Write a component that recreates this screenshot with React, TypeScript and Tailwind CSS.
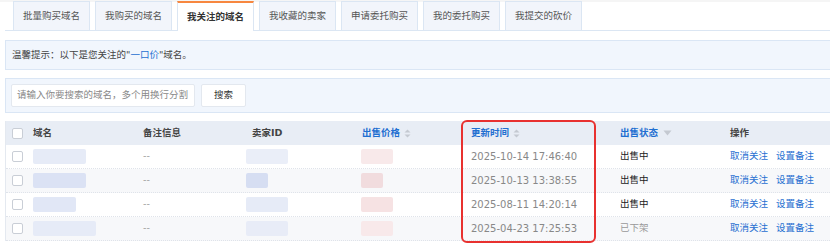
import React from "react";

const tabs = [
  "批量购买域名",
  "我购买的域名",
  "我关注的域名",
  "我收藏的卖家",
  "申请委托购买",
  "我的委托购买",
  "我提交的砍价",
];

const rows = [
  { time: "2025-10-14 17:46:40", status: "出售中", on: true, d: "w-[53px] bg-[#e6ebf7]", s: "w-[42px] bg-[#eaeef8]", p: "w-[32px] bg-[#f8e9ea]" },
  { time: "2025-10-13 13:38:55", status: "出售中", on: true, d: "w-[53px] bg-[#dbe2f4]", s: "w-[22px] bg-[#d6def2]", p: "w-[22px] bg-[#f1dcde]" },
  { time: "2025-08-11 14:20:14", status: "出售中", on: true, d: "w-[43px] bg-[#e1e7f6]", s: "w-[42px] bg-[#e6ebf7]", p: "w-[32px] bg-[#f6e2e3]" },
  { time: "2025-04-23 17:25:53", status: "已下架", on: false, d: "w-[63px] bg-[#e6ebf7]", s: "w-[42px] bg-[#e8ecf7]", p: "w-[32px] bg-[#f8e9ea]" },
];

const cols = "grid grid-cols-[27px_110px_109px_110px_109px_149px_110px_1fr] items-center";

function Sort() {
  return (
    <svg width="7" height="9" viewBox="0 0 7 9" className="ml-[4px]">
      <path d="M3.5 0.5 L6.5 3.6 L0.5 3.6 Z" fill="#c4c9d1" />
      <path d="M3.5 8.5 L6.5 5.4 L0.5 5.4 Z" fill="#c4c9d1" />
    </svg>
  );
}

function Check() {
  return <div className="ml-[6px] h-[11px] w-[11px] rounded-[2px] border border-[#c9ced6] bg-white" />;
}

export default function App() {
  return (
    <div
      className="h-[246px] w-[830px] overflow-hidden bg-white text-[9.5px] text-[#333]"
      style={{ fontFamily: '"DejaVu Sans", "Noto Sans CJK SC", sans-serif' }}
    >
      <div className="h-[2px] bg-[#f5f5f5]" />

      {/* tabs */}
      <div className="ml-[5px] flex h-[29px] items-end border-b border-[#dbe6f3] pl-[8px]">
        {tabs.map((t, i) =>
          i === 2 ? (
            <div
              key={t}
              className="relative -mb-px mr-[5px] flex h-[30px] w-[77px] items-center justify-center border-x border-t-2 border-x-[#dbe6f3] border-t-[#f7873f] bg-white font-bold text-[#333]"
            >
              {t}
            </div>
          ) : (
            <div
              key={t}
              className="mr-[5px] flex h-[29px] w-[77px] items-center justify-center border-x border-t border-[#dbe6f3] bg-[#f2f5fb] text-[#555]"
            >
              {t}
            </div>
          )
        )}
      </div>

      {/* tip */}
      <div className="ml-[5px] mt-[9px] flex h-[30px] items-center border-y border-l border-[#dae6f5] bg-[#f1f6fd] pl-[6px] text-[#444]">
        温馨提示：以下是您关注的"<span className="text-[#1f6fd1]">一口价</span>"域名。
      </div>

      {/* search */}
      <div className="ml-[5px] mt-[8px] flex h-[35px] items-center gap-[6px] border-y border-l border-[#dae6f5] bg-[#f1f6fd] pl-[5px]">
        <div className="flex h-[23px] w-[184px] items-center overflow-hidden whitespace-nowrap rounded-[2px] border border-[#e3e8ef] bg-white pl-[5px] text-[#888]">
          请输入你要搜索的域名，多个用换行分割
        </div>
        <div className="flex h-[23px] w-[45px] items-center justify-center rounded-[2px] border border-[#e3e8ef] bg-white text-[#333]">
          搜索
        </div>
      </div>

      {/* table */}
      <div className="relative ml-[5px] mt-[8px] border-l border-[#e4e9f0]">
        <div className={`${cols} h-[24px] bg-[#e8edf5] font-bold text-[#444]`}>
          <Check />
          <div>域名</div>
          <div>备注信息</div>
          <div>卖家ID</div>
          <div className="flex items-center text-[#1f6fd1]">
            出售价格
            <Sort />
          </div>
          <div className="flex items-center text-[#1f6fd1]">
            更新时间
            <Sort />
          </div>
          <div className="flex items-center text-[#1f6fd1]">
            出售状态
            <svg width="9" height="6" viewBox="0 0 9 6" className="ml-[5px]">
              <path d="M0.5 0.5 L8.5 0.5 L4.5 5.5 Z" fill="#c4c9d1" />
            </svg>
          </div>
          <div>操作</div>
        </div>

        {rows.map((r, i) => (
          <div
            key={r.time}
            className={`${cols} h-[24px] border-b border-dotted border-[#dfe3ea] ${i % 2 ? "bg-[#f7f8fa]" : "bg-white"}`}
          >
            <Check />
            <div className="flex items-center">
              <div className={`h-[15px] rounded-[2px] ${r.d}`} />
            </div>
            <div className="text-[#999]">--</div>
            <div className="flex items-center">
              <div className={`-ml-[6px] h-[15px] rounded-[2px] ${r.s}`} />
            </div>
            <div className="flex items-center">
              <div className={`-ml-[1px] h-[15px] rounded-[2px] ${r.p}`} />
            </div>
            <div className="text-[10px] text-[#888]">{r.time}</div>
            <div className={r.on ? "text-[#222]" : "text-[#999]"}>{r.status}</div>
            <div className="flex gap-[8px] text-[#1f6fd1]">
              <span>取消关注</span>
              <span>设置备注</span>
            </div>
          </div>
        ))}

        {/* highlight */}
        <div className="pointer-events-none absolute left-[455px] top-[-1px] h-[123px] w-[135px] rounded-[6px] border-2 border-[#e8312f]" />
      </div>
    </div>
  );
}
